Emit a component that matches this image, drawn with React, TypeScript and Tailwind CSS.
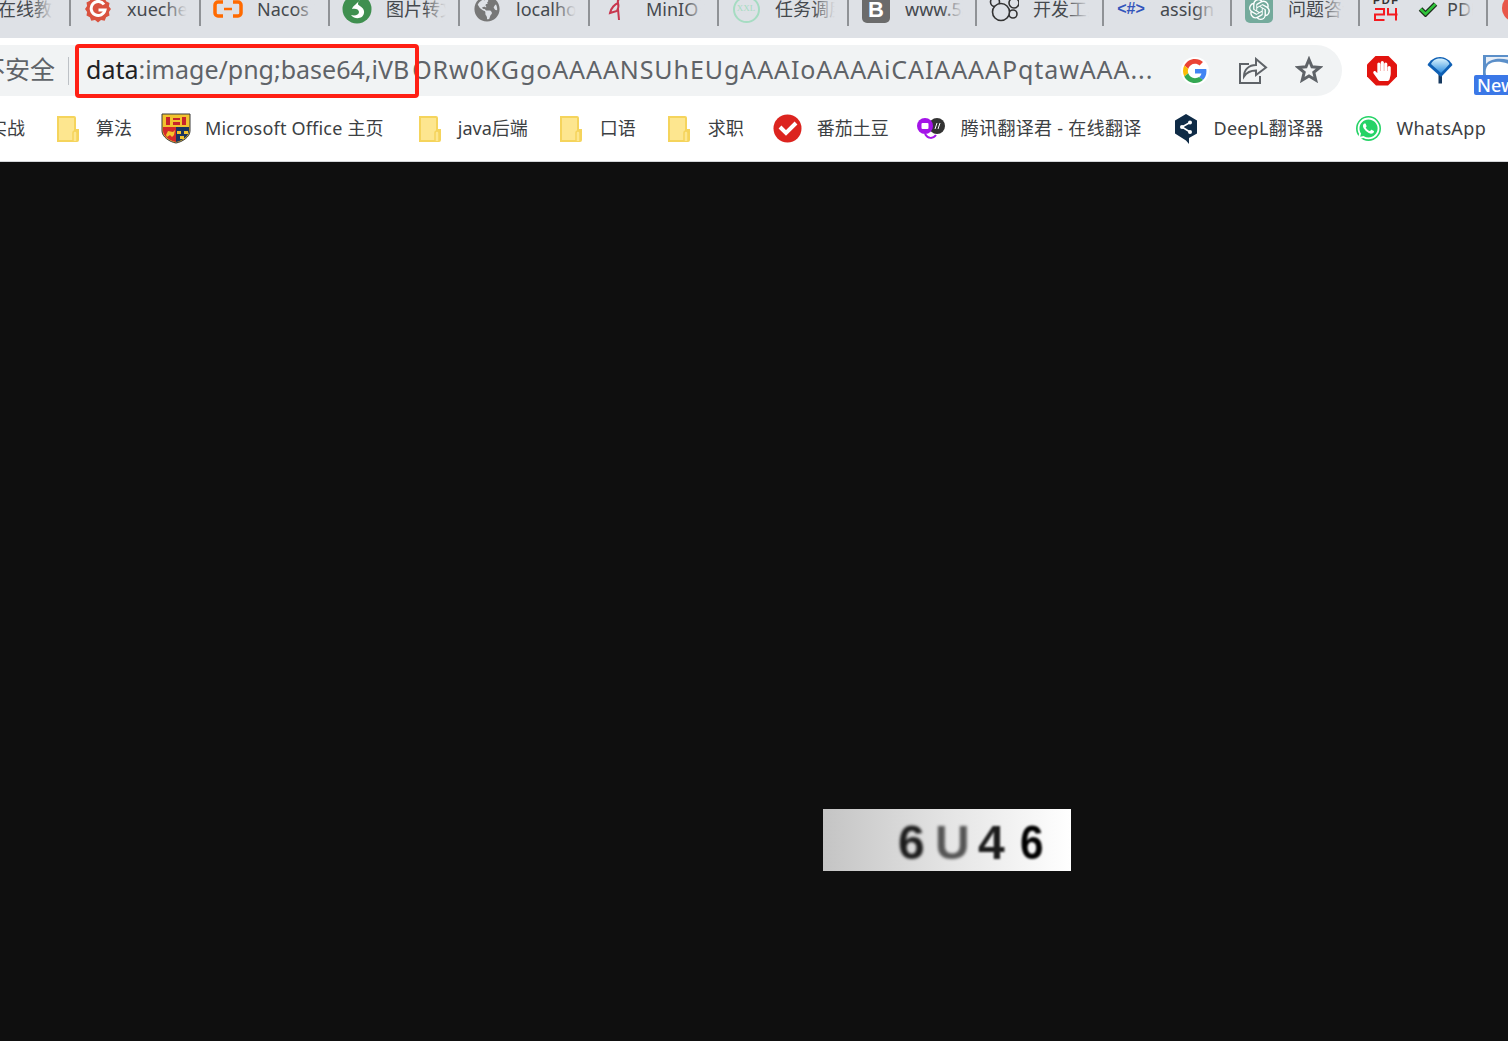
import React from "react";
import { SiOpenai } from "react-icons/si";
import { FaWhatsapp, FaHandPaper, FaGlobeAmericas } from "react-icons/fa";

const sans = "font-['Noto_Sans','Noto_Sans_CJK_SC',sans-serif]";

const Gitee = () => (
  <svg width="26" height="28" viewBox="0 0 26 28">
    <path d="M13 1l3 2.400 3.700-.7 1.400 3.500 3.400 1.700-.6 3.700L26 14l-2.100 2.900.6 3.700-3.400 1.700-1.400 3.500-3.700-.7L13 27.500l-3-2.400-3.700.7-1.400-3.500-3.400-1.700.6-3.700L0 14l2.100-2.900-.6-3.700 3.400-1.700 1.400-3.500 3.700.7z" fill="#d9523f" />
    <path d="M19 9.500A7 7 0 1 0 20 15h-6.500" fill="none" stroke="#fff" strokeWidth="3" />
  </svg>
);
const Nacos = () => (
  <svg width="30" height="18" viewBox="0 0 30 18">
    <path d="M10 2H5a3 3 0 0 0-3 3v8a3 3 0 0 0 3 3h5M20 2h5a3 3 0 0 1 3 3v8a3 3 0 0 1-3 3h-5" fill="none" stroke="#ff6a00" strokeWidth="3.500" />
    <path d="M11 9h8" stroke="#ff6a00" strokeWidth="2.500" />
  </svg>
);
const GreenS = () => (
  <svg width="30" height="30" viewBox="0 0 30 30">
    <circle cx="15" cy="15" r="14.500" fill="#3f8f4f" />
    <path d="M18 5c-1 4-7 6-8 10 3-1 7 0 7 3s-4 4-8 3c4 5 12 4 13-2s-6-7-6-9 1-3 2-5z" fill="#fff" />
  </svg>
);
const Flamingo = () => (
  <svg width="30" height="30" viewBox="0 0 30 30">
    <g fill="none" stroke="#c8374f" strokeWidth="2">
      <path d="M8 19c1-5 5-9 8-10 1 3 0 6-1 8z" />
      <path d="M16 9c-1-4 3-6 7-4" />
      <path d="M16 15l1 11" />
    </g>
  </svg>
);
const Xxl = () => (
  <div className="flex h-[27px] w-[27px] items-center justify-center rounded-full border-2 border-[#a6dcc2] font-['Liberation_Serif',serif] text-[9px] text-[#a6dcc2]">XXL</div>
);
const Boot = () => (
  <div className="flex h-[28px] w-[28px] items-center justify-center rounded-[5px] bg-[#6b6b6b] font-['Liberation_Sans',sans-serif] text-[22px] font-bold text-white">B</div>
);
const Clover = () => (
  <svg width="30" height="30" viewBox="0 0 30 30">
    <g fill="none" stroke="#333" strokeWidth="1.600">
      <circle cx="6" cy="8" r="4.500" />
      <circle cx="25" cy="9" r="5" />
      <circle cx="24" cy="20" r="4" />
      <circle cx="12" cy="18" r="8.500" fill="#dee1e6" />
    </g>
  </svg>
);
const Hash = () => <span className="font-['Liberation_Sans',sans-serif] text-[16px] font-bold leading-none text-[#3355bb]">&lt;#&gt;</span>;
const Gpt = () => (
  <div className="flex h-[28px] w-[28px] items-center justify-center rounded-[5px] bg-[#74aa9c]">
    <SiOpenai size={21} color="#fff" />
  </div>
);
const Pdf24 = () => (
  <svg className="shrink-0" width="26" height="30" viewBox="0 0 26 30">
    <text x="0" y="10" fontFamily="'Liberation Sans', sans-serif" fontWeight="700" fontSize="11" fill="#333" textLength="25">PDF</text>
    <path d="M2 15h9v5.500H2V26h9.500M15 14v6.500h9.500M23 14v12.500" fill="none" stroke="#f41a1f" strokeWidth="2" />
  </svg>
);
const Check = () => (
  <svg className="ml-[19px] shrink-0" width="20" height="16" viewBox="0 0 20 16">
    <path d="M2.500 8L7.500 13 17.500 3" fill="none" stroke="#1d2b1d" strokeWidth="5" />
    <path d="M2.500 8L7.500 13 17.500 3" fill="none" stroke="#2fc43a" strokeWidth="2.500" />
  </svg>
);

const tabs: { icon: React.ReactNode; text: string; w: string; pad: string; tw: string }[] = [
  { icon: <div className="w-[28px]" />, text: "在线教育", w: "w-[132px]", pad: "pl-[15px]", tw: "w-[55px]" },
  { icon: <Gitee />, text: "xuecheng", w: "w-[130px]", pad: "pl-[12px]", tw: "w-[60px]" },
  { icon: <Nacos />, text: "Nacos", w: "w-[129px]", pad: "pl-[12px]", tw: "w-[60px]" },
  { icon: <GreenS />, text: "图片转文字", w: "w-[130px]", pad: "pl-[12px]", tw: "w-[60px]" },
  { icon: <FaGlobeAmericas size={26} color="#777" />, text: "localhost", w: "w-[130px]", pad: "pl-[12px]", tw: "w-[60px]" },
  { icon: <Flamingo />, text: "MinIO", w: "w-[129px]", pad: "pl-[12px]", tw: "w-[60px]" },
  { icon: <Xxl />, text: "任务调度", w: "w-[130px]", pad: "pl-[12px]", tw: "w-[60px]" },
  { icon: <Boot />, text: "www.5axxw", w: "w-[128px]", pad: "pl-[12px]", tw: "w-[58px]" },
  { icon: <Clover />, text: "开发工具", w: "w-[127px]", pad: "pl-[12px]", tw: "w-[56px]" },
  { icon: <Hash />, text: "assign", w: "w-[128px]", pad: "pl-[12px]", tw: "w-[56px]" },
  { icon: <Gpt />, text: "问题咨询", w: "w-[128px]", pad: "pl-[12px]", tw: "w-[56px]" },
];

const Folder = () => (
  <svg width="22" height="26" viewBox="0 0 22 26">
    <path d="M1 1h16a1 1 0 0 1 1 1v12h3v10a1 1 0 0 1-1 1H1z" fill="#fde68f" stroke="#f5d45c" strokeWidth="2" />
    <path d="M16 25v-8a2 2 0 0 1 4 0v8" fill="#fde68f" stroke="#f5d45c" strokeWidth="1.500" />
  </svg>
);
const Crest = () => (
  <svg width="30" height="31" viewBox="0 0 30 31">
    <path d="M1 1h28v17c0 6-8 11-14 12C9 29 1 24 1 18z" fill="#f2c32e" stroke="#3a3a3a" strokeWidth="1" />
    <rect x="5" y="4" width="4" height="8" fill="#c8242b" />
    <rect x="12" y="5" width="7" height="2" fill="#c8242b" />
    <rect x="12" y="9" width="7" height="3" fill="#c8242b" />
    <rect x="21" y="4" width="4" height="8" fill="#c8242b" />
    <path d="M2 14h13v15C9 28 2 23 2 18z" fill="#d32a2a" />
    <path d="M15 14h13v4c0 5-7 10-13 11z" fill="#1a3560" />
    <path d="M16 18h4v3h-4zM23 18h4v3h-4zM19 23h4v3h-4z" fill="#f2c32e" />
    <path d="M5 22l2-4 5 1 2-2-1 5-2 2-2-2-3 2z" fill="#f2c32e" />
  </svg>
);
const Tomato = () => (
  <svg width="29" height="29" viewBox="0 0 29 29">
    <circle cx="14.500" cy="14.500" r="14" fill="#dc241f" />
    <path d="M7 13l6 6 10-10" fill="none" stroke="#fff" strokeWidth="4" />
  </svg>
);
const Tencent = () => (
  <svg width="30" height="26" viewBox="0 0 30 26">
    <circle cx="21" cy="10" r="8" fill="#333" />
    <circle cx="9" cy="10" r="8" fill="#a414e8" />
    <path d="M9 18c3 5 8 5 11 1" fill="none" stroke="#a414e8" strokeWidth="2" />
    <rect x="5.500" y="7" width="7" height="6" rx="1" fill="#fff" />
    <path d="M19 13l2-6M22 13l2-6" stroke="#fff" strokeWidth="1" />
  </svg>
);
const Deepl = () => (
  <svg width="24" height="30" viewBox="0 0 24 30">
    <path d="M12 0l11 6.500v13L15 24v6l-3-3.500-11-7v-13z" fill="#0f2b46" />
    <circle cx="8" cy="13" r="2" fill="#fff" />
    <circle cx="16" cy="8.500" r="2" fill="#fff" />
    <circle cx="16" cy="18" r="2" fill="#fff" />
    <path d="M8 13l8-4.500M8 13l8 5" stroke="#fff" strokeWidth="1.500" />
  </svg>
);
const Wa = () => (
  <div className="relative flex h-[25px] w-[25px] items-center justify-center rounded-full bg-[#25d366]">
    <FaWhatsapp size={25} color="#fff" className="absolute" />
    <div className="h-[14px] w-[14px]" />
  </div>
);

const bookmarks: { icon?: React.ReactNode; text: string; cls: string }[] = [
  { text: "实战", cls: "-ml-[11px]" },
  { icon: <Folder />, text: "算法", cls: "ml-[32px] gap-[17px]" },
  { icon: <Crest />, text: "Microsoft Office 主页", cls: "ml-[29px] gap-[14px] tracking-[0.2px]" },
  { icon: <Folder />, text: "java后端", cls: "ml-[35px] gap-[17px]" },
  { icon: <Folder />, text: "口语", cls: "ml-[32px] gap-[18px]" },
  { icon: <Folder />, text: "求职", cls: "ml-[32px] gap-[18px]" },
  { icon: <Tomato />, text: "番茄土豆", cls: "ml-[29px] gap-[15px]" },
  { icon: <Tencent />, text: "腾讯翻译君 - 在线翻译", cls: "ml-[27px] gap-[15px] tracking-[0.3px]" },
  { icon: <Deepl />, text: "DeepL翻译器", cls: "ml-[32px] gap-[16px] tracking-[0.25px]" },
  { icon: <Wa />, text: "WhatsApp", cls: "ml-[32px] gap-[16px] tracking-[0.35px]" },
];

export default function App() {
  return (
    <div className={`flex h-[1041px] w-[1508px] flex-col overflow-hidden bg-[#0f0f0f] ${sans}`}>
      {/* tab strip */}
      <div className="flex h-[38px] shrink-0 items-start overflow-hidden bg-[#dee1e6]">
        <div className="-ml-[61px] flex items-start">
          {tabs.map((t, i) => (
            <div key={i} className={`flex h-[26px] shrink-0 border-r-2 border-[#8f9296] ${t.w}`}>
              <div className={`-mt-[6px] flex h-[30px] w-full items-center ${t.pad}`}>
                <div className="flex w-[30px] shrink-0 items-center justify-center">{t.icon}</div>
                <div className={`relative ml-[14px] h-[26px] overflow-hidden whitespace-nowrap text-[18px] leading-[26px] text-[#45494e] ${t.tw}`}>
                  {t.text}
                  <div className="absolute inset-y-0 right-0 w-[22px] bg-gradient-to-r from-[#dee1e600] to-[#dee1e6]" />
                </div>
              </div>
            </div>
          ))}
          {/* PDF24 tab */}
          <div className="flex h-[26px] w-[128px] shrink-0 border-r-2 border-[#8f9296]">
            <div className="-mt-[6px] flex h-[30px] w-full items-center pl-[13px]">
              <Pdf24 />
              <Check />
              <div className="relative ml-[9px] h-[26px] w-[26px] overflow-hidden whitespace-nowrap text-[18px] leading-[26px] text-[#45494e]">
                PDF
                <div className="absolute inset-y-0 right-0 w-[14px] bg-gradient-to-r from-[#dee1e600] to-[#dee1e6]" />
              </div>
            </div>
          </div>
          <div className="-mt-[6px] ml-[14px] h-[28px] w-[28px] shrink-0 rounded-full bg-[#e8574a]" />
        </div>
      </div>

      {/* toolbar */}
      <div className="flex h-[58px] shrink-0 items-end bg-white">
        <div className="relative -ml-[20px] flex h-[51px] w-[1362px] shrink-0 items-center rounded-r-full bg-[#f1f3f4] pb-[2px]">
          <span className="w-[75px] shrink-0 whitespace-nowrap text-[25px] text-[#5f6368]">不安全</span>
          <div className="ml-[13px] mt-[2px] h-[28px] w-px shrink-0 bg-[#bdc1c6]" />
          <div className="ml-[17px] w-[1070px] shrink-0 overflow-hidden whitespace-nowrap text-[25px] text-[#5f6368]">
            <span className="text-[#202124]">data</span>:image/png;base64,iVB
            <span className="ml-[3px] tracking-[0.92px]">ORw0KGgoAAAANSUhEUgAAAIoAAAAiCAIAAAAPqtawAAA...</span>
          </div>
          <div className="ml-[25px] mt-[2px] flex h-[28px] w-[28px] shrink-0 items-center justify-center rounded-full bg-white">
            <svg width="24" height="24" viewBox="0 0 48 48">
              <path fill="#EA4335" d="M24 9.500c3.500 0 6.700 1.300 9.100 3.500l6.800-6.800C35.800 2.400 30.300 0 24 0 14.600 0 6.500 5.400 2.600 13.200l7.900 6.100C12.400 13.700 17.700 9.500 24 9.500z" />
              <path fill="#4285F4" d="M46.900 24.500c0-1.600-.1-3.100-.4-4.500H24v9h12.900c-.6 3-2.200 5.500-4.800 7.200l7.700 6c4.500-4.200 7.100-10.300 7.100-17.700z" />
              <path fill="#FBBC05" d="M10.500 28.700c-.5-1.500-.8-3-.8-4.700s.3-3.200.8-4.700l-7.900-6.100C.9 16.500 0 20.100 0 24s.9 7.500 2.600 10.800z" />
              <path fill="#34A853" d="M24 48c6.500 0 11.900-2.100 15.900-5.800l-7.700-6c-2.200 1.500-4.900 2.300-8.200 2.300-6.300 0-11.600-4.200-13.500-9.800l-7.900 6.100C6.500 42.600 14.600 48 24 48z" />
            </svg>
          </div>
          <svg className="ml-[29px] mt-[2px] shrink-0" width="30" height="28" viewBox="0 0 30 28" fill="none" stroke="#5f6368" strokeWidth="2">
            <path d="M11 7H2v19h20v-7" />
            <path d="M18 2l10 8.500L18 18v-4.500c-6 0-9 1.500-12 6 0-7 5-11.500 12-11.500z" />
          </svg>
          <svg className="ml-[27px] shrink-0" width="28" height="27" viewBox="0 0 28 27" fill="none" stroke="#5f6368" strokeWidth="3">
            <path d="M14 3.500l3 7.300 7.800.6-6 5 1.900 7.600-6.700-4.100-6.700 4.100 1.900-7.600-6-5 7.800-.6z" />
          </svg>
        </div>
        <div className="flex h-[51px] flex-1 items-center">
          <div className="ml-[25px] flex h-[30px] w-[30px] shrink-0 items-center justify-center bg-[#e2140f] [clip-path:polygon(30%_0,70%_0,100%_30%,100%_70%,70%_100%,30%_100%,0_70%,0_30%)]">
            <FaHandPaper size={20} color="#fff" />
          </div>
          <svg className="ml-[30px] shrink-0" width="26" height="27" viewBox="0 0 26 27">
            <defs>
              <linearGradient id="fn" x1="0" y1="0" x2="0" y2="1">
                <stop offset="0" stopColor="#d8f2fd" />
                <stop offset="1" stopColor="#2f8fe0" />
              </linearGradient>
            </defs>
            <path d="M15 17v9.500h-3.500V17z" fill="#16395f" />
            <path d="M13 0C18 0 23 3 25.500 8L14 20 .5 8C3 3 8 0 13 0z" fill="#0e5fb4" />
            <path d="M13 1.500C17 1.500 21 3 22.500 7 20 10 17 13 14 16 11 13 7 10 4 7 6 3 9 1.500 13 1.500z" fill="url(#fn)" />
          </svg>
          <div className="relative ml-[21px] h-[51px] w-[35px] shrink-0">
            <svg className="absolute left-[9px] top-[10px]" width="26" height="20" viewBox="0 0 26 20">
              <rect x="0" y="0" width="26" height="20" fill="#5b8fc9" />
              <path d="M3 20C1 10 8 3 26 9v11z" fill="#fff" />
              <path d="M3 2h23v3C18 3 8 3 3 9z" fill="#e8eef6" />
            </svg>
            <div className="absolute left-0 top-[30px] h-[20px] w-[35px] overflow-hidden rounded-l-[2px] bg-[#3b78e7] pl-[3px] text-[18px] font-medium leading-[20px] text-white">New</div>
          </div>
        </div>
      </div>

      {/* bookmarks */}
      <div className="flex h-[66px] shrink-0 items-center overflow-hidden border-b border-[#d4d6d9] bg-white text-[18px] text-[#3c4043]">
        {bookmarks.map((b, i) => (
          <div key={i} className={`flex shrink-0 items-center whitespace-nowrap ${b.cls}`}>
            {b.icon}
            <span>{b.text}</span>
          </div>
        ))}
      </div>

      {/* page */}
      <div className="flex flex-1 items-start bg-[#0f0f0f] pl-[823px] pt-[647px]">
        <div className="flex h-[62px] w-[248px] items-center bg-gradient-to-r from-[#c4c4c4] via-[#e4e4e4] to-white pl-[75px] pt-[5px] font-['Liberation_Sans',sans-serif] text-[48px] font-bold text-[#1c1c1c]">
          <span className="w-[37px] blur-[1.500px]">6</span>
          <span className="w-[43px] text-[#555] blur-[1.800px]">U</span>
          <span className="w-[42px] blur-[1px]">4</span>
          <span className="origin-left scale-x-[0.88] text-black blur-[1px]">6</span>
        </div>
      </div>

      {/* annotation */}
      <div className="absolute left-[75px] top-[44px] h-[54px] w-[344px] rounded-[4px] border-4 border-[#ff1f14]" />
    </div>
  );
}
